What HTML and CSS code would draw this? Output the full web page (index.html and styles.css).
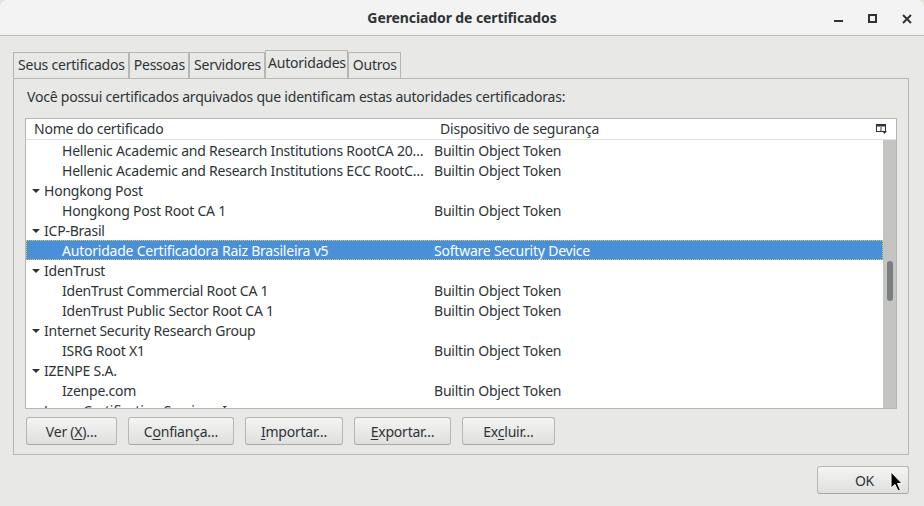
FILE: index.html
```html
<!DOCTYPE html>
<html lang="pt-BR">
<head>
<meta charset="utf-8">
<title>Gerenciador de certificados</title>
<link rel="stylesheet" href="styles.css">
</head>
<body>
<div class="window">
  <header class="titlebar">
    <div class="spacer"></div>
    <div class="title">Gerenciador de certificados</div>
    <div class="controls">
      <span class="ctl"><svg width="10" height="10" viewBox="0 0 10 10"><rect x="0" y="6" width="9" height="2" fill="#2e3436"/></svg></span>
      <span class="ctl"><svg width="10" height="10" viewBox="0 0 10 10"><rect x="1" y="1" width="7" height="7" fill="none" stroke="#2e3436" stroke-width="2"/></svg></span>
      <span class="ctl"><svg width="10" height="10" viewBox="0 0 10 10"><path d="M1 1 L9 9 M9 1 L1 9" stroke="#2e3436" stroke-width="2" fill="none"/></svg></span>
    </div>
  </header>
  <main class="content">
    <nav class="tabs">
      <div class="tab">Seus certificados</div>
      <div class="tab">Pessoas</div>
      <div class="tab">Servidores</div>
      <div class="tab active">Autoridades</div>
      <div class="tab">Outros</div>
    </nav>
    <section class="panel">
      <p class="desc">Você possui certificados arquivados que identificam estas autoridades certificadoras:</p>
      <div class="tree">
        <div class="tree-head">
          <div class="hcol h1">Nome do certificado</div>
          <div class="hcol h2">Dispositivo de segurança</div>
          <svg class="picker" width="11" height="10" viewBox="0 0 11 10">
            <rect x="0.5" y="0.5" width="9" height="7" fill="none" stroke="#2e3436"/>
            <rect x="0.5" y="0.5" width="9" height="2" fill="#2e3436"/>
            <path d="M5 3 V8" stroke="#2e3436"/>
            <path d="M6 7 H11 L8.5 10 Z" fill="#2e3436"/>
          </svg>
        </div>
        <div class="tree-body">
          <div class="rows">
            <div class="row child"><span class="c1">Hellenic Academic and Research Institutions RootCA 2015</span><span class="c2">Builtin Object Token</span></div>
            <div class="row child"><span class="c1">Hellenic Academic and Research Institutions ECC RootCA 2015</span><span class="c2">Builtin Object Token</span></div>
            <div class="row parent"><span class="c1"><i class="tri"></i>Hongkong Post</span></div>
            <div class="row child"><span class="c1">Hongkong Post Root CA 1</span><span class="c2">Builtin Object Token</span></div>
            <div class="row parent"><span class="c1"><i class="tri"></i>ICP-Brasil</span></div>
            <div class="row child selected"><span class="c1">Autoridade Certificadora Raiz Brasileira v5</span><span class="c2">Software Security Device</span></div>
            <div class="row parent"><span class="c1"><i class="tri"></i>IdenTrust</span></div>
            <div class="row child"><span class="c1">IdenTrust Commercial Root CA 1</span><span class="c2">Builtin Object Token</span></div>
            <div class="row child"><span class="c1">IdenTrust Public Sector Root CA 1</span><span class="c2">Builtin Object Token</span></div>
            <div class="row parent"><span class="c1"><i class="tri"></i>Internet Security Research Group</span></div>
            <div class="row child"><span class="c1">ISRG Root X1</span><span class="c2">Builtin Object Token</span></div>
            <div class="row parent"><span class="c1"><i class="tri"></i>IZENPE S.A.</span></div>
            <div class="row child"><span class="c1">Izenpe.com</span><span class="c2">Builtin Object Token</span></div>
            <div class="row parent"><span class="c1"><i class="tri"></i>Japan Certification Services, Inc.</span></div>
          </div>
          <div class="scrollbar"><div class="thumb"></div></div>
        </div>
      </div>
      <div class="buttons">
        <button class="btn btn-view">Ver (<u>X</u>)…</button>
        <button class="btn btn-trust">C<u>o</u>nfiança…</button>
        <button class="btn btn-import"><u>I</u>mportar…</button>
        <button class="btn btn-export"><u>E</u>xportar…</button>
        <button class="btn btn-delete">Ex<u>c</u>luir…</button>
      </div>
    </section>
    <div class="footer">
      <button class="btn ok">OK</button>
    </div>
  </main>
</div>
<svg class="cursor" width="14" height="22" viewBox="0 0 14 22">
  <path d="M1 1 L1 17 L5 13.5 L8 20 L10.5 19 L7.5 12.5 L12 12.5 Z" fill="#000" stroke="#fff" stroke-width="1" stroke-linejoin="round"/>
</svg>
</body>
</html>
```

FILE: styles.css
```css
* { box-sizing: border-box; }
html, body { margin: 0; padding: 0; }
body {
  width: 924px;
  height: 506px;
  overflow: hidden;
  background: #dfe6d8;
  font-family: "Noto Sans", "Open Sans", sans-serif;
  font-size: 14px;
  letter-spacing: -0.22px;
  color: #2e3436;
  position: relative;
}
.window {
  width: 924px;
  height: 506px;
  display: flex;
  flex-direction: column;
  background: #e8e8e7;
  border-radius: 7px 7px 0 0;
  overflow: hidden;
}
.titlebar {
  height: 36px;
  flex: none;
  display: grid;
  grid-template-columns: 1fr auto 1fr;
  align-items: center;
  background: #f3f3f3;
  border-bottom: 1px solid #bdbdbb;
}
.title {
  font-weight: bold;
  font-size: 14px;
  letter-spacing: -0.1px;
  color: #2e3436;
  padding-bottom: 2px;
}
.controls {
  justify-self: end;
  display: flex;
}
.ctl {
  width: 34px;
  height: 36px;
  display: flex;
  align-items: center;
  justify-content: center;
  padding-top: 1px;
}
.content {
  flex: 1;
  display: flex;
  flex-direction: column;
  padding: 14px 15px 0 13px;
}
.tabs {
  display: flex;
  align-items: flex-end;
  height: 28px;
  flex: none;
}
.tab {
  height: 26px;
  line-height: 24px;
  padding: 0 3px 0 4px;
  border: 1px solid #b6b6b3;
  border-bottom: none;
  white-space: nowrap;
}
.tab.active {
  height: 28px;
  line-height: 24px;
  padding: 0 1px 0 2px;
}
.panel {
  height: 377px;
  flex: none;
  border: 1px solid #b6b6b3;
  padding: 8px 11px 0 11px;
  display: flex;
  flex-direction: column;
}
.desc {
  margin: 0 0 11px 2px;
  height: 20px;
  line-height: 20px;
  white-space: nowrap;
}
.tree {
  height: 291px;
  flex: none;
  border: 1px solid #b6b6b3;
  background: #fff;
  display: flex;
  flex-direction: column;
}
.tree-head {
  height: 21px;
  flex: none;
  display: flex;
  align-items: center;
  border-bottom: 1px solid #dededc;
}
.hcol { line-height: 20px; white-space: nowrap; }
.h1 { width: 404px; padding-left: 8px; }
.h2 { flex: 1; padding-left: 10px; }
.picker { margin-right: 9px; }
.tree-body {
  flex: 1;
  display: flex;
  overflow: hidden;
}
.rows { flex: 1; min-width: 0; }
.row {
  height: 20px;
  display: flex;
  align-items: flex-start;
  padding-top: 2px;
  line-height: 18px;
  white-space: nowrap;
}
.c1 {
  width: 404px;
  flex: none;
  overflow: hidden;
  text-overflow: ellipsis;
  padding-right: 2px;
  display: flex;
  align-items: center;
  height: 18px;
}
.row.child .c1 { padding-left: 36px; display: block; }
.row.parent .c1 { padding-left: 6px; }
.c2 { padding-left: 4px; }
.tri {
  width: 0;
  height: 0;
  border-left: 4px solid transparent;
  border-right: 4px solid transparent;
  border-top: 4px solid #2e3436;
  margin-right: 4px;
  margin-top: -1px;
}
.row.selected {
  background: #4a90d9;
  color: #fff;
  outline: 1px dotted #e9c84d;
  outline-offset: -1px;
}
.scrollbar {
  width: 13px;
  flex: none;
  background: #c4c5c3;
}
.thumb {
  margin: 121px 0 0 4px;
  width: 6px;
  height: 40px;
  border-radius: 3px;
  background: #7b7e7e;
}
.buttons {
  display: flex;
  gap: 11px;
  margin: 8px 0 0 1px;
}
.btn {
  height: 28px;
  border: 1px solid #b6b6b3;
  border-bottom-color: #a8a8a5;
  border-radius: 3px;
  background: linear-gradient(#f4f4f3, #dfdfde);
  font: inherit;
  letter-spacing: inherit;
  color: #2e3436;
  padding: 0;
  white-space: nowrap;
}
.btn-view { width: 91px; }
.btn-trust { width: 106px; }
.btn-import { width: 98px; }
.btn-export { width: 97px; }
.btn-delete { width: 93px; }
.btn u { text-underline-offset: 2px; }
.footer {
  display: flex;
  justify-content: flex-end;
  margin-top: 11px;
}
.btn.ok { width: 92px; padding-left: 3px; }
.cursor {
  position: absolute;
  left: 890px;
  top: 471px;
}
```
